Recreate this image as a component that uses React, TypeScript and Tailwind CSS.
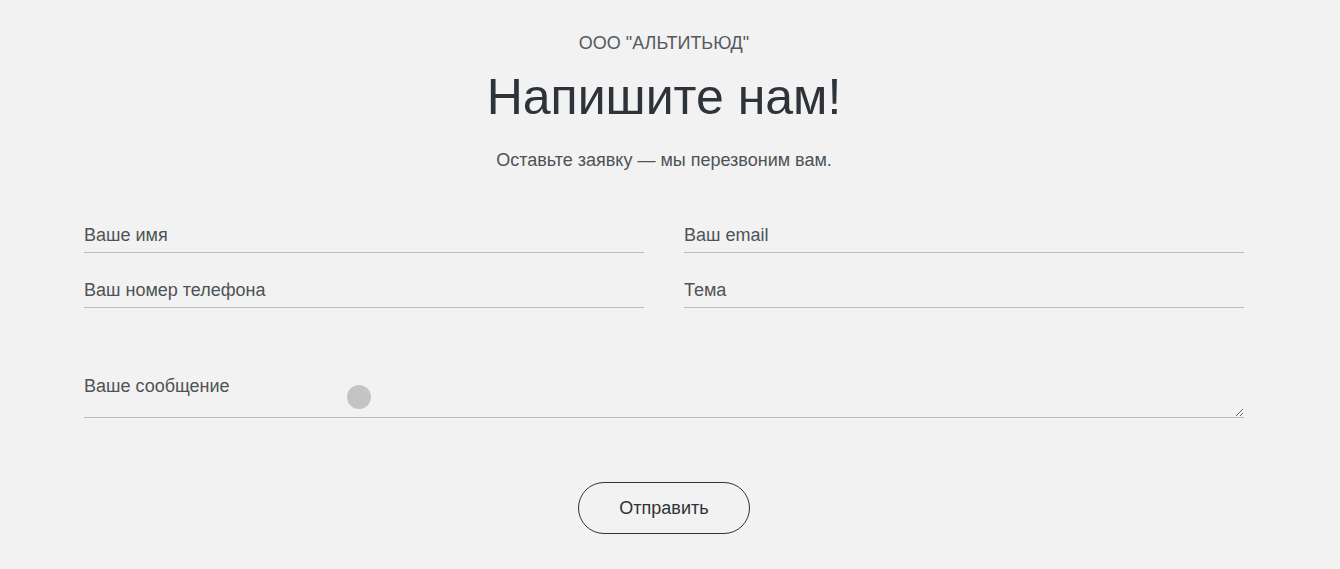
export default function App() {
  return (
    <div className="relative min-h-[569px] bg-[#f2f2f2] font-['Liberation_Sans',Arial,sans-serif] text-[#4d5357]">
      <div className="w-[1328px]">
        <div className="flex flex-col items-center pt-[32px]">
          <p className="text-[18px] leading-[22px] text-[#55595d]">ООО "АЛЬТИТЬЮД"</p>
          <h1 className="mt-[15px] text-[50px] leading-[56px] text-[#2d3338]">Напишите нам!</h1>
          <p className="mt-[24px] text-[18px] leading-[22px] text-[#4d5357]">Оставьте заявку — мы перезвоним вам.</p>
        </div>

        <form className="mx-auto mt-[45px] w-[1160px]">
          <div className="grid grid-cols-2 gap-x-10 gap-y-[18px]">
            {["Ваше имя", "Ваш email", "Ваш номер телефона", "Тема"].map((p) => (
              <input
                key={p}
                placeholder={p}
                className="h-[37px] w-full border-b border-[#bdbdbd] bg-transparent pt-[7px] pb-[5px] text-[18px] leading-[24px] outline-none placeholder:text-[#4d5357]"
              />
            ))}
          </div>

          <textarea
            placeholder="Ваше сообщение"
            className="mt-[58px] block h-[52px] w-full border-b border-[#bdbdbd] bg-transparent pt-[8px] text-[18px] leading-[24px] outline-none placeholder:text-[#4d5357]"
          />

          <div className="mt-[64px] flex justify-center">
            <button
              type="button"
              className="h-[52px] w-[172px] rounded-full border border-[#333] text-[18px] text-[#2d3338]"
            >
              Отправить
            </button>
          </div>
        </form>
      </div>

      <div className="absolute left-[347px] top-[385px] h-6 w-6 rounded-full bg-[#c4c4c4]" />
    </div>
  );
}
